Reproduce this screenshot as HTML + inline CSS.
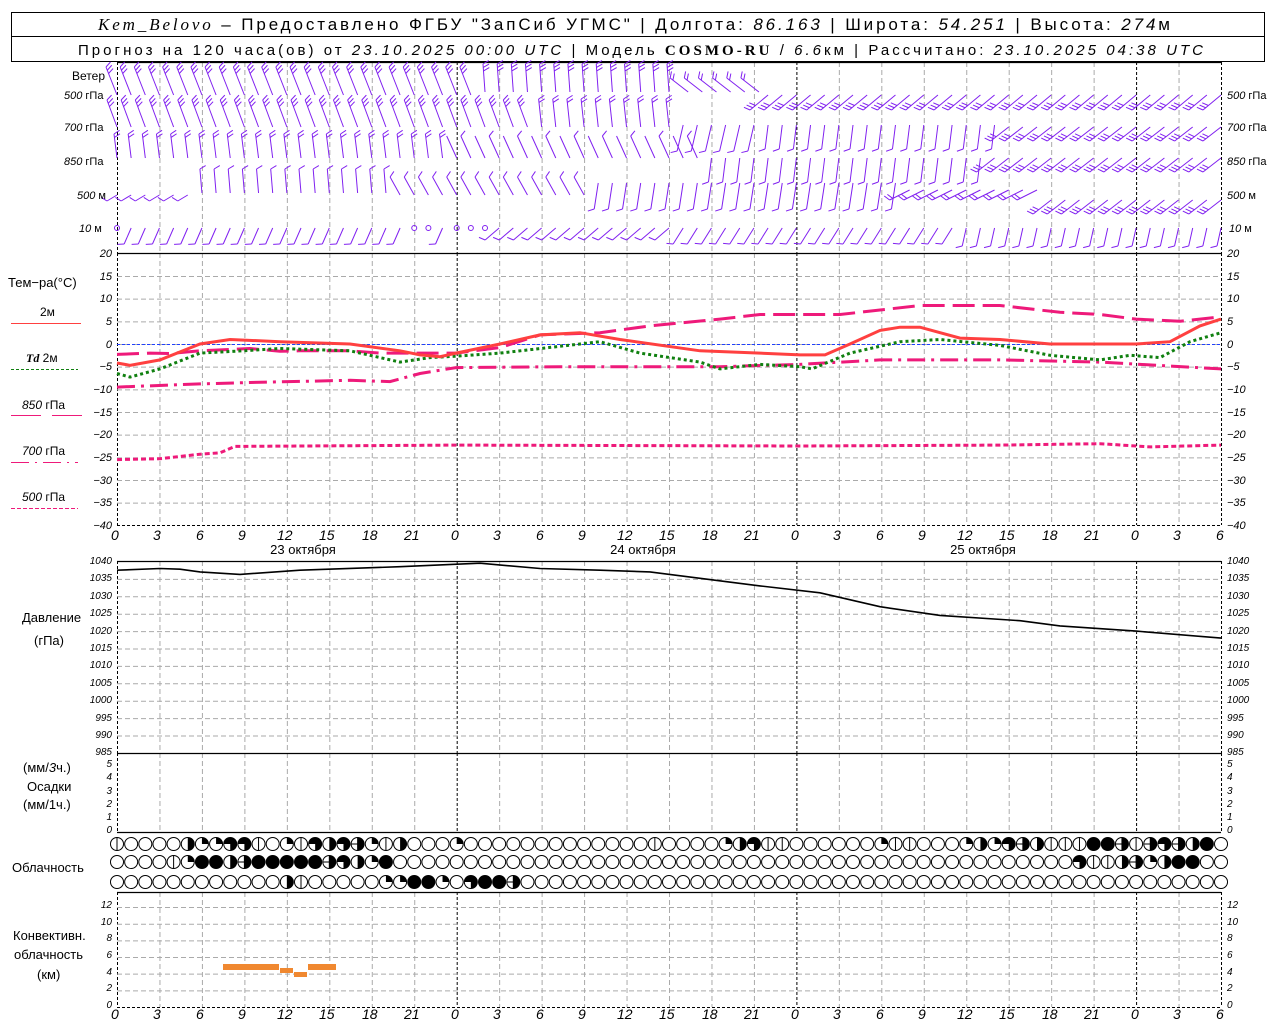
<!DOCTYPE html>
<html><head><meta charset="utf-8"><style>
html,body{margin:0;padding:0;background:#fff;}
svg{display:block;font-family:"Liberation Sans","DejaVu Sans",sans-serif;}
.t{font-size:11px;font-style:italic;}
.l{font-size:12px;}
.h{font-size:14px;font-style:italic;}
</style></head><body>
<svg id="s" width="1280" height="1024" viewBox="0 0 1280 1024" xmlns="http://www.w3.org/2000/svg">
<rect x="11.5" y="12.5" width="1253" height="49" fill="none" stroke="#000"/>
<line x1="11" y1="36.5" x2="1265" y2="36.5" stroke="#000"/>
<text x="98" y="30" font-size="17" textLength="1072" lengthAdjust="spacing"><tspan font-family="Liberation Serif" font-style="italic">Kem_Belovo</tspan> – Предоставлено ФГБУ "ЗапСиб УГМС" | Долгота: <tspan font-style="italic">86.163</tspan> | Широта: <tspan font-style="italic">54.251</tspan> | Высота: <tspan font-style="italic">274</tspan>м</text>
<text x="78" y="55" font-size="15" textLength="1125" lengthAdjust="spacing">Прогноз на 120 часа(ов) от <tspan font-style="italic">23.10.2025 00:00 UTC</tspan> | Модель <tspan font-family="Liberation Serif" font-weight="bold">COSMO-RU</tspan> / <tspan font-style="italic">6.6</tspan>км | Рассчитано: <tspan font-style="italic">23.10.2025 04:38 UTC</tspan></text>
<g id="g"></g>
<g class="l">
<text x="72" y="80">Ветер</text>
<text x="64" y="99" class="t">500 <tspan font-style="normal">гПа</tspan></text>
<text x="64" y="131" class="t">700 <tspan font-style="normal">гПа</tspan></text>
<text x="64" y="165" class="t">850 <tspan font-style="normal">гПа</tspan></text>
<text x="77" y="199" class="t">500 <tspan font-style="normal">м</tspan></text>
<text x="79" y="232" class="t">10 <tspan font-style="normal">  м</tspan></text>
<text x="1227" y="99" class="t">500 <tspan font-style="normal">гПа</tspan></text>
<text x="1227" y="131" class="t">700 <tspan font-style="normal">гПа</tspan></text>
<text x="1227" y="165" class="t">850 <tspan font-style="normal">гПа</tspan></text>
<text x="1227" y="199" class="t">500 <tspan font-style="normal">м</tspan></text>
<text x="1229" y="232" class="t">10 <tspan font-style="normal">  м</tspan></text>
</g>
<g font-size="13">
<text x="8" y="287">Тем−ра(°C)</text>
<text x="40" y="316" font-size="12">2м</text>
<text x="26" y="362" font-size="12"><tspan font-family="Liberation Serif" font-style="italic" font-weight="bold">Td</tspan>  2м</text>
<text x="22" y="409" font-size="12"><tspan font-style="italic">850</tspan> гПа</text>
<text x="22" y="455" font-size="12"><tspan font-style="italic">700</tspan> гПа</text>
<text x="22" y="501" font-size="12"><tspan font-style="italic">500</tspan> гПа</text>
<text x="22" y="622">Давление</text>
<text x="34" y="645">(гПа)</text>
<text x="23" y="772">(мм/<tspan font-style="italic">3</tspan>ч.)</text>
<text x="27" y="791">Осадки</text>
<text x="23" y="809">(мм/1ч.)</text>
<text x="12" y="872">Облачность</text>
<text x="13" y="940">Конвективн.</text>
<text x="14" y="959">облачность</text>
<text x="37" y="979">(км)</text>
</g>
<g font-size="13" text-anchor="middle">
<text x="303" y="554">23 октября</text>
<text x="643" y="554">24 октября</text>
<text x="983" y="554">25 октября</text>
</g>
</svg>
<script>
var s=document.getElementById('g'),NS='http://www.w3.org/2000/svg';
function el(n,a,p){var e=document.createElementNS(NS,n);for(var k in a)e.setAttribute(k,a[k]);(p||s).appendChild(e);return e;}
function X(h){return 117+h*14.154;}
function L(x1,y1,x2,y2,c,w,d){var a={x1:x1,y1:y1,x2:x2,y2:y2,stroke:c||'#000','stroke-width':w||1};if(d)a['stroke-dasharray']=d;return el('line',a);}
var panels=[[62,253],[253,525],[561,753],[753,832],[892,1007]];
panels.forEach(function(p){for(var h=0;h<=78;h+=3){var day=(h%24==0)||h==78;L(X(h)+.5,p[0],X(h)+.5,p[1],day?'#000':'#aaa',1,day?'3,2':'5,3');}});
function hg(y){L(117,y+.5,1221,y+.5,'#aaa',1,'5,3');}
for(var t=15;t>=-35;t-=5)hg(344-t*4.533);
for(var p=1035;p>=990;p-=5)hg(561.5+(1040-p)*3.48);
for(var k=2;k<=12;k+=2)hg(1007-k*8.33);
[62,253,561,753,832,892].forEach(function(y){L(117,y+.5,1221,y+.5,'#000',1.3);});
L(117,1007.5,1221,1007.5,'#000',1,'3,2');L(117,525.5,1221,525.5,'#000',1,'3,2');
L(117,344.5,1221,344.5,'#2040ff',1,'3,2');
function curve(pts,fx,fy,c,w,d){var str='';pts.forEach(function(q,i){str+=(i?'L':'M')+fx(q[0]).toFixed(1)+','+fy(q[1]).toFixed(1);});var a={d:str,fill:'none',stroke:c,'stroke-width':w};if(d)a['stroke-dasharray']=d;el('path',a);}
var ix=function(x){return x},ty=function(t){return 344-t*4.533};
curve([[117,-2.3],[150,-2],[170,-2.1],[200,-1.5],[250,-1],[280,-1.6],[300,-1.5],[350,-1.5],[380,-2],[420,-2],[456,-2],[500,-0.8],[540,2],[600,2.5],[650,4],[720,5.5],[760,6.5],[840,6.5],[880,7.5],[920,8.5],[1000,8.5],[1060,7],[1100,6.5],[1136,5.5],[1180,5],[1221,6]],ix,ty,'#ee1a7a',3,'22,8');
curve([[117,-9.5],[200,-8.8],[250,-8.5],[350,-8],[390,-8.3],[420,-6.5],[456,-5.2],[560,-5],[640,-5],[720,-5],[800,-4.5],[880,-3.5],[1000,-3.5],[1100,-4],[1221,-5.5]],ix,ty,'#ee1a7a',3,'18,6,3,6');
curve([[117,-25.5],[160,-25.3],[200,-24.3],[220,-24],[235,-22.6],[456,-22.3],[800,-22.5],[1000,-22.3],[1100,-22],[1150,-22.7],[1221,-22.3]],ix,ty,'#ee1a7a',3,'5,3');
curve([[117,-6.5],[130,-7.3],[160,-5.5],[200,-2],[243,-1.5],[280,-1],[350,-1.5],[400,-4],[430,-3],[456,-2.7],[500,-2],[560,-0.5],[600,0.5],[640,-2],[700,-4],[720,-5.5],[760,-4.5],[800,-5],[812,-5.5],[850,-2],[900,0.5],[940,1],[1000,-0.3],[1050,-2.5],[1100,-3.5],[1130,-2.5],[1160,-3],[1190,0.5],[1221,2.5]],ix,ty,'#108010',3,'3,3');
curve([[117,-4.2],[130,-4.7],[160,-3.5],[200,0],[230,1],[280,0.5],[350,0],[400,-1.5],[420,-2.4],[440,-2.8],[456,-2],[500,0],[540,2],[580,2.5],[620,1],[700,-1.5],[760,-2],[800,-2.4],[825,-2.4],[850,0],[880,3],[900,3.7],[920,3.7],[960,1.3],[1000,1],[1050,0],[1136,0],[1170,0.5],[1200,4],[1221,5.5]],ix,ty,'#ff4040',3);
L(11,323.5,81,323.5,'#ff4040',1);L(11,369.5,78,369.5,'#108010',1,'3,2');
L(11,415.5,41,415.5,'#ee1a7a',1);L(52,415.5,82,415.5,'#ee1a7a',1);
L(11,462.5,78,462.5,'#ee1a7a',1,'18,6,2,6');L(11,508.5,78,508.5,'#ee1a7a',1,'4,2');
var py=function(p){return 561.5+(1040-p)*3.48};
curve([[117,1037.5],[160,1038],[180,1037.8],[200,1037],[240,1036.3],[300,1037.5],[400,1038.5],[480,1039.5],[540,1038],[600,1037.5],[650,1037],[760,1033],[820,1031],[880,1027],[940,1024.5],[1020,1023],[1060,1021.5],[1136,1020],[1221,1018]],ix,py,'#000',1.6);
[[223,964,279,970],[280,968,293,973],[294,972,307,977],[308,964,336,970]].forEach(function(b){el('rect',{x:b[0],y:b[1],width:b[2]-b[0],height:b[3]-b[1],fill:'#f08830'});});
var rows=[
'L0000HQQTTL0QLTHTCQLH000Q0000000000000L0000QHTLL000000QLL000QHQTCHLLLFFCLCTCHF',
'0000LQFFHCFFFFFCTHQF000000000000000000000000000000000000000000000000TLLHCQHFF',
'000000000000HL00000QQFFQ0TFFC00000000000000000000000000000000000000000000000000'];
var ry=[844,862,882];
rows.forEach(function(r,ri){for(var h=0;h<=78;h++){var c=r[h]||'0',x=X(h),y=ry[ri],R=6.5;
 el('circle',{cx:x,cy:y,r:R,fill:c=='F'?'#000':'#fff',stroke:'#000','stroke-width':1});
 if(c=='Q')el('path',{d:'M'+x+','+y+'V'+(y-R)+'A'+R+','+R+' 0 0 1 '+(x+R)+','+y+'Z',fill:'#000'});
 if(c=='H'||c=='C')el('path',{d:'M'+x+','+(y-R)+'A'+R+','+R+' 0 0 1 '+x+','+(y+R)+'Z',fill:'#000'});
 if(c=='T')el('path',{d:'M'+x+','+y+'H'+(x-R)+'A'+R+','+R+' 0 1 1 '+x+','+(y+R)+'Z',fill:'#000'});
 if(c=='L'||c=='C')L(x,y-R,x,y+R,'#000',1);
 if(c=='C')L(x-R,y,x,y,'#000',1);
}});
var P='#8020f0';
function barb(x,y,dx,dy,n){L(x,y,x+dx,y+dy,P,1);var len=Math.sqrt(dx*dx+dy*dy),ux=dx/len,uy=dy/len,px=-uy,py2=ux;
 for(var i=0;i<n;i++){var bx=x+dx-ux*i*3.5,by=y+dy-uy*i*3.5;L(bx,by,bx+px*6+ux*3,by+py2*6+uy*3,P,1);}}
for(var h=0;h<=78;h++){var x=X(h);
 if(h<26)barb(x,95,-11,-28,3);else if(h<40)barb(x,92,-2,-28,3);else if(h<46)barb(x+5,92,-18,-14,2);else barb(x,95,-18,15,3);
 if(h<30)barb(x,127,-10,-27,3);else if(h<40)barb(x,127,-3,-28,2);else if(h<46)barb(x,125,-6,26,1);else if(h<63)barb(x,125,-3,24,1);else barb(x,127,-18,14,3);
 if(h<24)barb(x,158,-3,-24,2);else if(h<42)barb(x,158,-10,-22,(h%2));else if(h<62)barb(x,158,-3,24,1);else barb(x,158,-18,14,3);
 if(h<6)barb(x,195,-10,6,1);else if(h<20)barb(x,193,-2,-24,1);else if(h<34)barb(x,195,-10,-18,1);else if(h<56)barb(x,183,-4,26,1);else if(h<66)barb(x,190,-20,10,2);else barb(x,200,-18,14,3);
 if(h==22||h==24||h==25||h==26||h==21||h==0){el('circle',{cx:x,cy:228,r:2.5,fill:'none',stroke:P});}
 else if(h<24)barb(x,228,-7,16,1);else if(h<40)barb(x,228,-14,12,1);else if(h<60)barb(x,228,-10,16,1);else barb(x,228,-4,18,1);
}
</script>
<div style="position:absolute;left:0;top:0;width:1280px;height:1024px;pointer-events:none;font-family:'Liberation Sans',sans-serif;font-style:italic;font-size:11px;">
<div style="position:absolute;left:80px;top:243px;width:32px;text-align:right;line-height:22.67px">20<br>15<br>10<br>5<br>0<br>−5<br>−10<br>−15<br>−20<br>−25<br>−30<br>−35<br>−40</div>
<div style="position:absolute;left:1227px;top:243px;line-height:22.67px">20<br>15<br>10<br>5<br>0<br>−5<br>−10<br>−15<br>−20<br>−25<br>−30<br>−35<br>−40</div>
<div style="position:absolute;left:80px;top:553px;width:32px;text-align:right;line-height:17.4px;font-size:10px">1040<br>1035<br>1030<br>1025<br>1020<br>1015<br>1010<br>1005<br>1000<br>995<br>990<br>985</div>
<div style="position:absolute;left:1227px;top:553px;line-height:17.4px;font-size:10px">1040<br>1035<br>1030<br>1025<br>1020<br>1015<br>1010<br>1005<br>1000<br>995<br>990<br>985</div>
<div style="position:absolute;left:92px;top:758px;width:20px;text-align:right;line-height:13.3px;font-size:10px">5<br>4<br>3<br>2<br>1<br>0</div>
<div style="position:absolute;left:1227px;top:758px;line-height:13.3px;font-size:10px">5<br>4<br>3<br>2<br>1<br>0</div>
<div style="position:absolute;left:92px;top:898px;width:20px;text-align:right;line-height:16.67px;font-size:10px">12<br>10<br>8<br>6<br>4<br>2<br>0</div>
<div style="position:absolute;left:1227px;top:898px;line-height:16.67px;font-size:10px">12<br>10<br>8<br>6<br>4<br>2<br>0</div>
</div>
<div style="position:absolute;left:0;top:527px;width:1280px;height:20px;font-family:'Liberation Sans',sans-serif;font-style:italic;font-size:14px;">
<span style="position:absolute;left:111px">0</span><span style="position:absolute;left:153px">3</span><span style="position:absolute;left:196px">6</span><span style="position:absolute;left:238px">9</span><span style="position:absolute;left:277px">12</span><span style="position:absolute;left:319px">15</span><span style="position:absolute;left:362px">18</span><span style="position:absolute;left:404px">21</span><span style="position:absolute;left:451px">0</span><span style="position:absolute;left:493px">3</span><span style="position:absolute;left:536px">6</span><span style="position:absolute;left:578px">9</span><span style="position:absolute;left:617px">12</span><span style="position:absolute;left:659px">15</span><span style="position:absolute;left:702px">18</span><span style="position:absolute;left:744px">21</span><span style="position:absolute;left:791px">0</span><span style="position:absolute;left:833px">3</span><span style="position:absolute;left:876px">6</span><span style="position:absolute;left:918px">9</span><span style="position:absolute;left:957px">12</span><span style="position:absolute;left:999px">15</span><span style="position:absolute;left:1042px">18</span><span style="position:absolute;left:1084px">21</span><span style="position:absolute;left:1131px">0</span><span style="position:absolute;left:1173px">3</span><span style="position:absolute;left:1216px">6</span>
</div>
<div style="position:absolute;left:0;top:1006px;width:1280px;height:18px;font-family:'Liberation Sans',sans-serif;font-style:italic;font-size:14px;">
<span style="position:absolute;left:111px">0</span><span style="position:absolute;left:153px">3</span><span style="position:absolute;left:196px">6</span><span style="position:absolute;left:238px">9</span><span style="position:absolute;left:277px">12</span><span style="position:absolute;left:319px">15</span><span style="position:absolute;left:362px">18</span><span style="position:absolute;left:404px">21</span><span style="position:absolute;left:451px">0</span><span style="position:absolute;left:493px">3</span><span style="position:absolute;left:536px">6</span><span style="position:absolute;left:578px">9</span><span style="position:absolute;left:617px">12</span><span style="position:absolute;left:659px">15</span><span style="position:absolute;left:702px">18</span><span style="position:absolute;left:744px">21</span><span style="position:absolute;left:791px">0</span><span style="position:absolute;left:833px">3</span><span style="position:absolute;left:876px">6</span><span style="position:absolute;left:918px">9</span><span style="position:absolute;left:957px">12</span><span style="position:absolute;left:999px">15</span><span style="position:absolute;left:1042px">18</span><span style="position:absolute;left:1084px">21</span><span style="position:absolute;left:1131px">0</span><span style="position:absolute;left:1173px">3</span><span style="position:absolute;left:1216px">6</span>
</div>
</body></html>
